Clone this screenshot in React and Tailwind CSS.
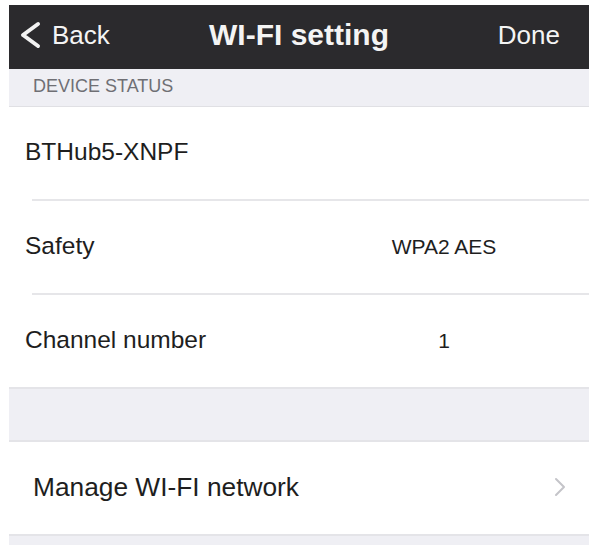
import React from 'react';

const rows = [
  { label: 'BTHub5-XNPF', value: '' },
  { label: 'Safety', value: 'WPA2 AES' },
  { label: 'Channel number', value: '1' },
];

function BackChevron() {
  return (
    <svg width="24" height="28" viewBox="0 0 24 28" className="shrink-0">
      <polyline
        points="20,3 5,14 20,25"
        fill="none"
        stroke="#f2f2f2"
        strokeWidth="4"
        strokeLinecap="round"
        strokeLinejoin="round"
      />
    </svg>
  );
}

function RightChevron() {
  return (
    <svg width="14" height="20" viewBox="0 0 14 20">
      <polyline
        points="3,2 11,10 3,18"
        fill="none"
        stroke="#c4c4c9"
        strokeWidth="2"
        strokeLinecap="round"
        strokeLinejoin="round"
      />
    </svg>
  );
}

export default function App() {
  return (
    <div className="min-h-[545px] bg-white pt-[5px] font-['Liberation_Sans',Arial,sans-serif]">
      <div className="ml-[9px] w-[580px]">
        {/* nav bar */}
        <div className="grid h-[64px] grid-cols-[1fr_auto_1fr] items-center bg-[#2b2a2d] pb-[4px] text-[#f4f4f4]">
          <div className="flex items-center pl-[9px]">
            <BackChevron />
            <span className="ml-[10px] text-[26px] leading-none">Back</span>
          </div>
          <div className="text-[30px] font-bold leading-none">WI-FI setting</div>
          <div className="flex justify-end pr-[29px]">
            <span className="text-[26px] leading-none">Done</span>
          </div>
        </div>

        {/* section header */}
        <div className="flex h-[38px] items-center border-b border-[#e0e0e4] bg-[#efeff4] pb-[4px] pl-[24px]">
          <span className="text-[18px] leading-none text-[#6f6f74]">DEVICE STATUS</span>
        </div>

        {/* status rows */}
        {rows.map((row, i) => (
          <div key={row.label}>
            <div className="flex h-[92px] items-center pb-[2px] pl-[16px] text-[#1e1e1e]">
              <span className="flex-1 text-[24.5px] leading-none">{row.label}</span>
              <span className="mr-[50px] w-[190px] text-center text-[21px] leading-none">{row.value}</span>
            </div>
            {i < rows.length - 1 && <div className="ml-[23px] h-[2px] bg-[#e6e6e9]" />}
          </div>
        ))}

        {/* spacer band */}
        <div className="h-[55px] border-y-2 border-[#e4e4e8] bg-[#efeff4]" />

        {/* manage row */}
        <div className="flex h-[92px] items-center justify-between pb-[2px] pl-[24px] pr-[22px] text-[#1e1e1e]">
          <span className="text-[26.3px] leading-none">Manage WI-FI network</span>
          <RightChevron />
        </div>

        <div className="h-[20px] border-t-2 border-[#e4e4e8] bg-[#efeff4]" />
      </div>
    </div>
  );
}
